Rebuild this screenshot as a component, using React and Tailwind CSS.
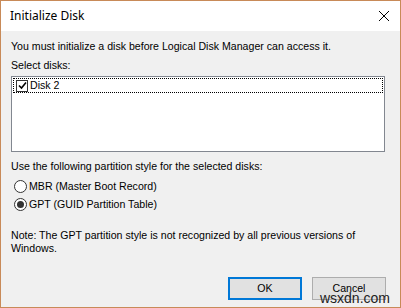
import React from "react";

export default function App() {
  const font = { fontFamily: '"Liberation Sans", Arial, sans-serif' };
  return (
    <div className="w-[401px] h-[308px] border border-[#c88a58] bg-[#f0f0f0] flex flex-col relative overflow-hidden" style={font}>
      <div className="h-[30px] bg-white flex items-center justify-between pl-[9px] pr-[9px] shrink-0">
        <span className="text-[12px] text-black" style={{ fontFamily: '"Noto Sans", "Open Sans", sans-serif' }}>Initialize Disk</span>
        <svg width="12" height="12" viewBox="0 0 12 12" className="mr-[1px]">
          <path d="M1 1L11 11M11 1L1 11" stroke="#000" strokeWidth="1" />
        </svg>
      </div>
      <div className="flex flex-col px-[10px] text-[10.6px] text-black leading-[13px]">
        <div className="mt-[9px]">You must initialize a disk before Logical Disk Manager can access it.</div>
        <div className="mt-[6px]">Select disks:</div>
        <div className="mt-[4px] h-[76px] w-[374px] border border-[#828790] bg-white p-[1px]">
          <div className="h-[15px] border border-dotted border-black flex items-center pl-[2px]">
            <div className="w-[12px] h-[12px] border border-[#333] bg-white flex items-center justify-center">
              <svg width="9" height="9" viewBox="0 0 9 9">
                <path d="M1 4.5L3.5 7L8 1.5" stroke="#000" strokeWidth="1.6" fill="none" />
              </svg>
            </div>
            <span className="ml-[2px]">Disk 2</span>
          </div>
        </div>
        <div className="mt-[8px]">Use the following partition style for the selected disks:</div>
        <div className="mt-[7px] flex items-center pl-[3px]">
          <div className="w-[13px] h-[13px] rounded-full border border-[#333] bg-white" />
          <span className="ml-[2px]">MBR (Master Boot Record)</span>
        </div>
        <div className="mt-[5px] flex items-center pl-[3px]">
          <div className="w-[13px] h-[13px] rounded-full border border-[#333] bg-white flex items-center justify-center">
            <div className="w-[7px] h-[7px] rounded-full bg-[#333]" />
          </div>
          <span className="ml-[2px]">GPT (GUID Partition Table)</span>
        </div>
        <div className="mt-[18px]">Note: The GPT partition style is not recognized by all previous versions of<br />Windows.</div>
        <div className="mt-[22px] flex justify-end gap-[10px] pr-[4px]">
          <div className="w-[74px] h-[23px] border-2 border-[#0078d7] bg-[#e1e1e1] flex items-center justify-center">OK</div>
          <div className="w-[74px] h-[23px] border border-[#adadad] bg-[#e1e1e1] flex items-center justify-center">Cancel</div>
        </div>
      </div>
      <div className="absolute right-[10px] bottom-[2px] text-[14px] leading-[14px] text-[#222]" style={{ fontFamily: '"Liberation Sans", Arial, sans-serif' }}>wsxdn.com</div>
    </div>
  );
}
